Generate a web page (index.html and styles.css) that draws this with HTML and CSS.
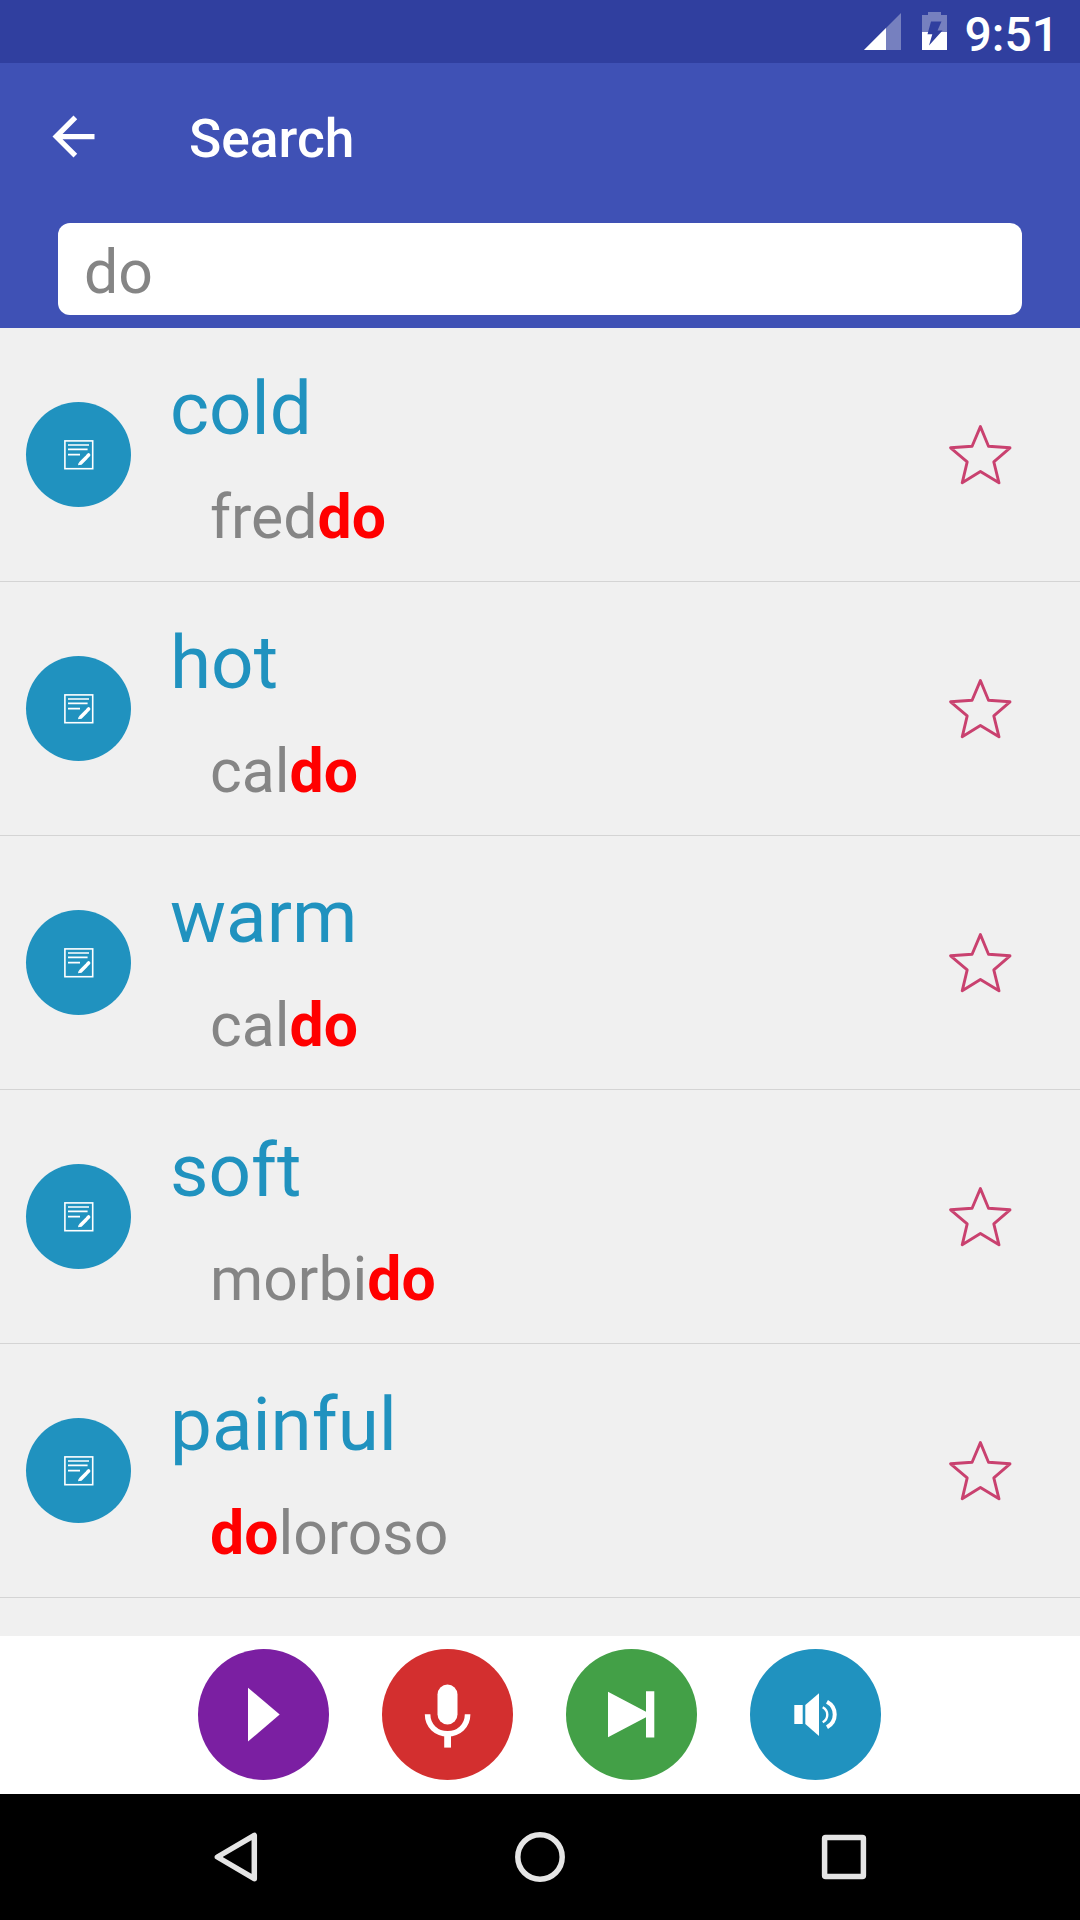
FILE: index.html
```html
<!DOCTYPE html>
<html lang="en">
<head>
  <meta charset="utf-8">
  <title>Search</title>
  <link rel="stylesheet" href="styles.css">
</head>
<body>
  <!-- shared icons -->
  <svg class="defs" width="0" height="0">
    <symbol id="note" viewBox="0 0 30 30">
      <rect x="0.9" y="0.9" width="27.8" height="27.8" fill="none" stroke="#fff" stroke-width="1.6"/>
      <path d="M4 5H25M4 9.4H23.6M4 14.6H16" stroke="#fff" stroke-width="1.7"/>
      <path d="M16.8 23L22.3 17.4M23.4 16.2L24.6 15" stroke="#fff" stroke-width="3.6" stroke-linecap="round"/>
      <path d="M14 25.3l.6-2.6 2 2z" fill="#fff"/>
    </symbol>
    <symbol id="star" viewBox="0 0 64 65">
      <path d="M32.4 4.6L40.5 24.3L62 25.8L45.8 39.8L51 60.8L32.4 49.4L14.2 60.8L19.2 39.8L2.6 25.8L24.1 24.3Z" fill="none" stroke="#c9416f" stroke-width="2.9" stroke-linejoin="round"/>
    </symbol>
  </svg>

  <div class="status-bar">
    <svg class="signal" width="37" height="37" viewBox="0 0 37 37">
      <path d="M37 0V37H0Z" fill="#fff" fill-opacity=".34"/>
      <path d="M22 15V37H0Z" fill="#fff"/>
    </svg>
    <svg class="battery" width="25" height="38" viewBox="0 0 25 38">
      <path d="M6 0H19V3H25V20H0V3H6Z" fill="#fff" fill-opacity=".34"/>
      <path d="M0 20H25V38H0Z" fill="#fff"/>
      <path d="M9 9.5H19.5L15.5 18.5H20.5L7 33.5L10.3 22.3H5.5Z" fill="#303f9f"/>
    </svg>
    <span class="clock">9:51</span>
  </div>

  <header>
    <div class="toolbar">
      <svg class="back" width="63" height="63" viewBox="0 0 24 24">
        <path d="M20 11H7.83l5.59-5.59L12 4l-8 8 8 8 1.41-1.41L7.83 13H20v-2z" fill="#fff"/>
      </svg>
      <h1>Search</h1>
    </div>
    <input type="text" class="search" value="do">
  </header>

  <main>
    <div class="row">
      <div class="note"><svg width="30" height="30"><use href="#note"/></svg></div>
      <div class="entry">
        <div class="word">cold</div>
        <div class="translation">fred<b>do</b></div>
      </div>
      <svg class="star" width="64" height="65"><use href="#star"/></svg>
    </div>
    <div class="row">
      <div class="note"><svg width="30" height="30"><use href="#note"/></svg></div>
      <div class="entry">
        <div class="word">hot</div>
        <div class="translation">cal<b>do</b></div>
      </div>
      <svg class="star" width="64" height="65"><use href="#star"/></svg>
    </div>
    <div class="row">
      <div class="note"><svg width="30" height="30"><use href="#note"/></svg></div>
      <div class="entry">
        <div class="word">warm</div>
        <div class="translation">cal<b>do</b></div>
      </div>
      <svg class="star" width="64" height="65"><use href="#star"/></svg>
    </div>
    <div class="row">
      <div class="note"><svg width="30" height="30"><use href="#note"/></svg></div>
      <div class="entry">
        <div class="word">soft</div>
        <div class="translation">morbi<b>do</b></div>
      </div>
      <svg class="star" width="64" height="65"><use href="#star"/></svg>
    </div>
    <div class="row">
      <div class="note"><svg width="30" height="30"><use href="#note"/></svg></div>
      <div class="entry">
        <div class="word">painful</div>
        <div class="translation"><b>do</b>loroso</div>
      </div>
      <svg class="star" width="64" height="65"><use href="#star"/></svg>
    </div>
  </main>

  <div class="controls">
    <div class="btn play">
      <svg viewBox="0 0 131 131"><path d="M50 38.7L81.7 65.6L50 92.5Z" fill="#fff"/></svg>
    </div>
    <div class="btn record">
      <svg viewBox="0 0 131 131">
        <rect x="55.5" y="35.5" width="20" height="40" rx="10" fill="#fff"/>
        <path d="M45.6 65.3C45.6 77 54.5 84.8 65.6 84.8S85.6 77 85.6 65.3" fill="none" stroke="#fff" stroke-width="5.6"/>
        <path d="M62.2 85H69V98.6H62.2Z" fill="#fff"/>
      </svg>
    </div>
    <div class="btn next">
      <svg viewBox="0 0 131 131"><path d="M42 42.7L80 62.8V42.3H88.3V88.6H80V68.2L42 88.3Z" fill="#fff"/></svg>
    </div>
    <div class="btn speak">
      <svg viewBox="0 0 131 131">
        <path d="M44.3 56H52.7V75H44.3Z" fill="#fff"/>
        <path d="M55.3 56L69 44.3V87L55.3 75Z" fill="#fff"/>
        <path d="M72.7 58.3C78.8 61.5 78.8 70 72.7 73.2" fill="none" stroke="#fff" stroke-width="2.4"/>
        <path d="M77 52.8C87.3 58.5 87.3 72.5 77 78.3" fill="none" stroke="#fff" stroke-width="4"/>
      </svg>
    </div>
  </div>

  <nav>
    <svg width="50" height="50" viewBox="0 0 50 50"><path d="M6.4 25L43.3 3.3V46.7Z"/></svg>
    <svg width="50" height="50" viewBox="0 0 50 50"><circle cx="25" cy="25" r="22.2"/></svg>
    <svg width="50" height="50" viewBox="0 0 50 50"><rect x="5.6" y="5.6" width="38.8" height="38.8" rx="1"/></svg>
  </nav>
</body>
</html>
```

FILE: styles.css
```css
*{box-sizing:border-box}
body{margin:0;width:1080px;height:1920px;display:flex;flex-direction:column;overflow:hidden;
  font-family:Roboto,"Noto Sans",sans-serif;background:#f0f0f0}
svg{display:block;flex:none}
.defs{position:absolute}

.status-bar{height:63px;flex:none;display:flex;justify-content:flex-end;align-items:flex-start;
  padding:0 21px 0 0;background:#303f9f;color:#fff}
.signal{margin-top:12.5px}
.battery{margin:12px 18px 0 21px}
.clock{font-size:48px;font-weight:500;line-height:56px;padding-top:7px}

header{height:265px;flex:none;background:#3f51b5}
.toolbar{height:147px;display:flex;align-items:center;padding-left:42px}
.toolbar h1{margin:0 0 0 84px;padding-top:4px;color:#fff;font-size:53.3px;font-weight:500;line-height:62px}
.search{display:block;width:964px;height:92px;margin:13px 58px 0;padding:7px 26px 0;border:0;
  border-radius:12px;background:#fff;color:#858585;font-family:inherit;font-size:60.8px;outline:none}

main{flex:1;min-height:0;overflow:hidden}
.row{height:254px;display:flex;align-items:center;padding:0 68px 0 26px;border-bottom:1px solid #d4d4d4}
.note{width:105px;height:105px;flex:none;display:flex;align-items:center;justify-content:center;
  border-radius:50%;background:#2092bf}
.entry{flex:1;margin-left:39px;padding-top:8px}
.word{font-size:74.6px;line-height:88px;color:#2092bf}
.translation{margin-top:30px;padding-left:40px;font-size:60.7px;line-height:70px;color:#858585}
.translation b{color:#f00;font-weight:700}

.controls{height:158px;flex:none;display:flex;gap:53px;padding:13px 0 0 198px;background:#fff}
.btn{width:131px;height:131px;border-radius:50%}
.play{background:#7b1fa2}
.record{background:#d32f2f}
.next{background:#43a047}
.speak{background:#2092bf}

nav{height:126px;flex:none;display:flex;align-items:center;justify-content:center;gap:254px;background:#000}
nav svg{fill:none;stroke:#e5e5e5;stroke-width:5.5;stroke-linejoin:round}
```
